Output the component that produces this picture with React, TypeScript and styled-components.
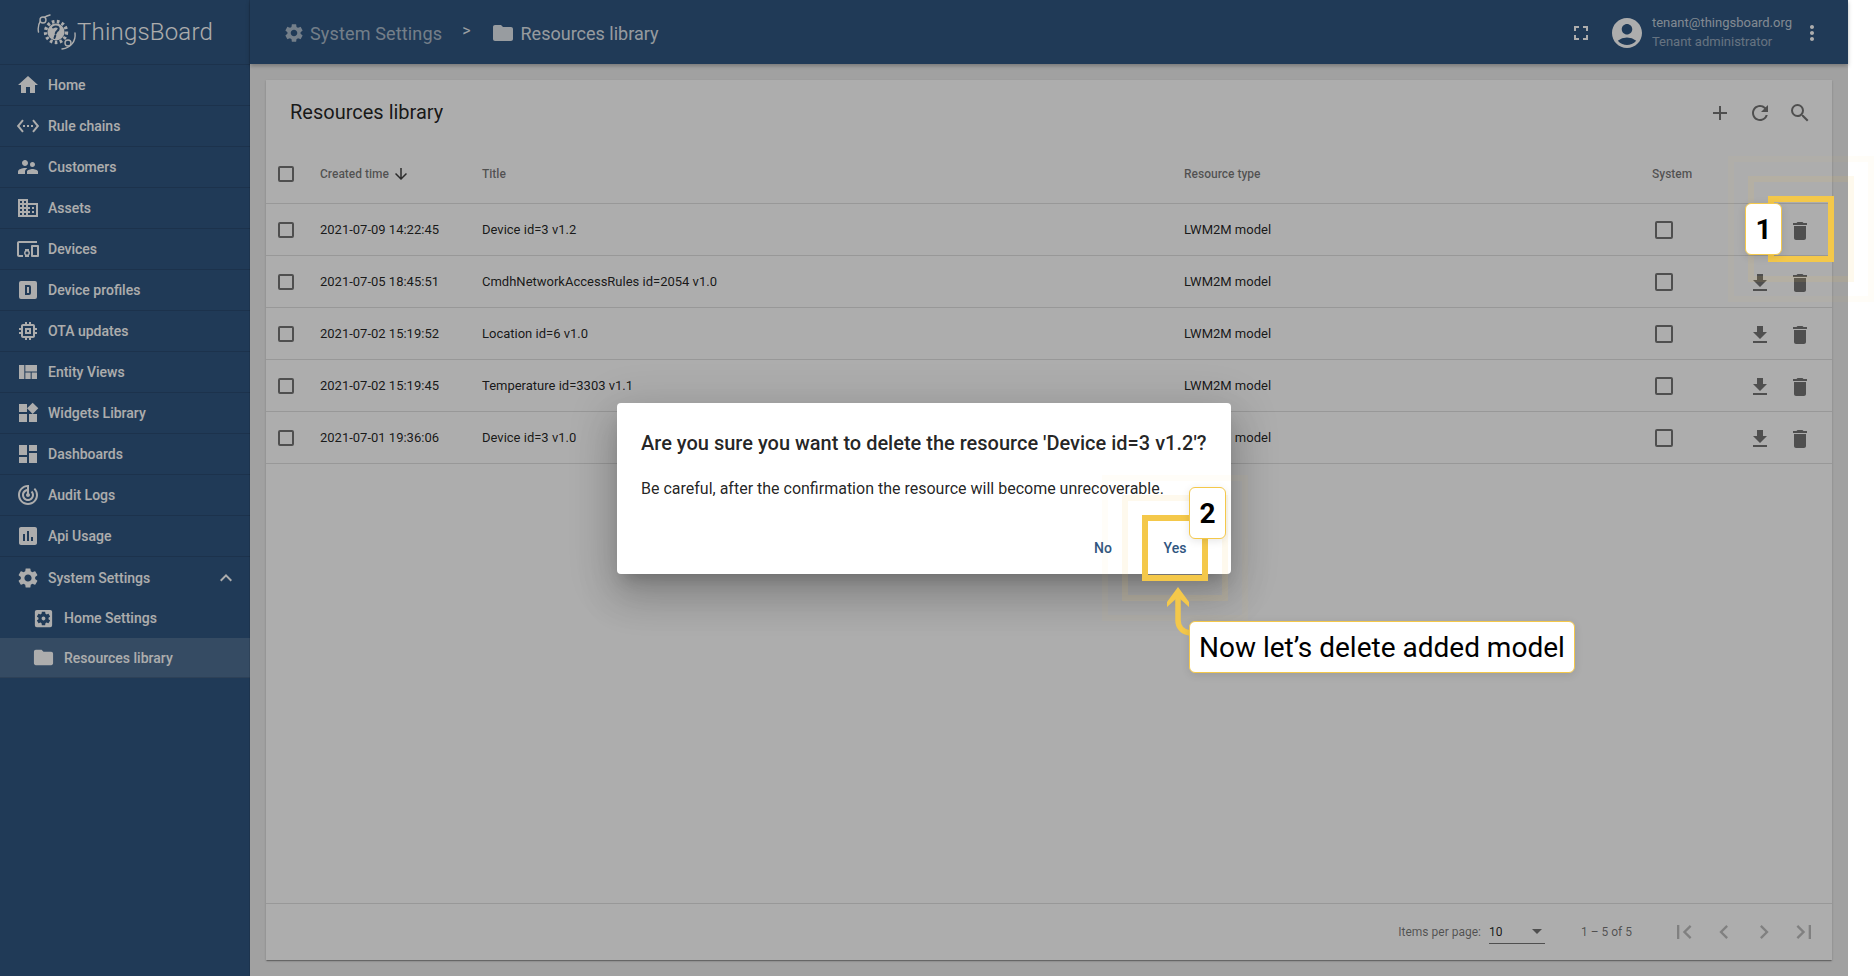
import React from 'react'
import styled, { createGlobalStyle } from 'styled-components'
import {
  MdAccountCircle,
  MdAdd,
  MdArrowDownward,
  MdChevronLeft,
  MdChevronRight,
  MdDashboard,
  MdDelete,
  MdDevicesOther,
  MdDomain,
  MdFileDownload,
  MdFirstPage,
  MdFolder,
  MdFullscreen,
  MdHome,
  MdInsertChart,
  MdKeyboardArrowUp,
  MdLastPage,
  MdMemory,
  MdMoreVert,
  MdRefresh,
  MdSearch,
  MdSettings,
  MdSettingsApplications,
  MdSettingsEthernet,
  MdSupervisorAccount,
  MdTrackChanges,
  MdViewQuilt,
  MdWidgets,
} from 'react-icons/md'

const Global = createGlobalStyle`
  html, body {
    margin: 0;
    background: #fff;
    overflow: hidden;
    font-family: Roboto, "Liberation Sans", sans-serif;
  }
  * { box-sizing: border-box; }
`

const Root = styled.div`
  position: relative;
  display: flex;
  width: 1848px;
  height: 976px;
  background: #eee;
`

const Sidebar = styled.aside`
  width: 250px;
  flex: none;
  background: #305680;
  color: #fff;
`

const Brand = styled.div`
  display: flex;
  align-items: center;
  height: 65px;
  padding: 0 0 1px 37px;
  border-bottom: 1px solid rgba(0, 0, 0, 0.12);
`

const BrandName = styled.span`
  font-size: 24px;
  font-weight: 300;
  letter-spacing: 0.2px;
`

const NavItem = styled.div<{ $sub?: boolean; $active?: boolean; $flat?: boolean }>`
  display: flex;
  align-items: center;
  gap: ${p => (p.$sub ? '9px' : '8px')};
  height: ${p => (p.$sub ? '40px' : '41px')};
  padding-left: ${p => (p.$sub ? '32px' : '16px')};
  font-size: 14px;
  font-weight: 500;
  background: ${p => (p.$active ? 'rgba(255, 255, 255, 0.15)' : 'transparent')};
  border-bottom: ${p => (p.$flat ? 'none' : '1px solid rgba(0, 0, 0, 0.12)')};
  svg { flex: none; }
`

const NavCaret = styled.span`
  display: flex;
  margin-left: auto;
  margin-right: 12px;
`

const Main = styled.div`
  flex: 1;
  min-width: 0;
  display: flex;
  flex-direction: column;
  border-left: 1px solid rgba(0, 0, 0, 0.1);
  margin-left: -1px;
`

const Topbar = styled.header`
  display: flex;
  align-items: center;
  height: 64px;
  flex: none;
  padding-left: 33px;
  background: #305680;
  color: #fff;
  box-shadow: 0 2px 4px rgba(0, 0, 0, 0.25);
  z-index: 1;
`

const Crumb = styled.span<{ $dim?: boolean }>`
  display: flex;
  align-items: center;
  gap: ${p => (p.$dim ? '5px' : '6px')};
  margin-top: 2px;
  font-size: 18px;
  letter-spacing: ${p => (p.$dim ? '0.15px' : '0')};
  color: ${p => (p.$dim ? 'rgba(255, 255, 255, 0.6)' : 'rgba(255, 255, 255, 0.85)')};
`

const CrumbSep = styled.span`
  margin: -4px 20px 0 20px;
  font-size: 16px;
  color: rgba(255, 255, 255, 0.9);
`

const TopRight = styled.div`
  display: flex;
  align-items: center;
  margin-left: auto;
  margin-top: 2px;
  padding-right: 24px;
`

const TopGap = styled.span`
  width: 16px;
`

const UserText = styled.div`
  display: flex;
  flex-direction: column;
  gap: 4px;
  margin: -2px 8px 0 7px;
  font-size: 13px;
  line-height: 15px;
`

const UserMail = styled.span`
  color: rgba(255, 255, 255, 0.7);
`

const UserRole = styled.span`
  color: rgba(255, 255, 255, 0.5);
`

const Content = styled.main`
  flex: 1;
  min-height: 0;
  padding: 16px;
`

const Card = styled.section`
  display: flex;
  flex-direction: column;
  height: 100%;
  background: #fff;
  box-shadow: 0 2px 1px -1px rgba(0, 0, 0, 0.2), 0 1px 1px rgba(0, 0, 0, 0.14), 0 1px 3px rgba(0, 0, 0, 0.12);
`

const CardHead = styled.div`
  display: flex;
  align-items: center;
  height: 64px;
  flex: none;
  padding: 0 20px 0 24px;
`

const CardTitle = styled.h1`
  margin: 0;
  font-size: 20px;
  font-weight: 400;
  color: rgba(0, 0, 0, 0.87);
`

const HeadTools = styled.div`
  display: flex;
  gap: 16px;
  margin: 2px 0 0 auto;
  color: rgba(0, 0, 0, 0.54);
`

const Row = styled.div<{ $head?: boolean }>`
  display: grid;
  grid-template-columns: 54px 162px 702px 468px 88px 1fr;
  align-items: center;
  height: ${p => (p.$head ? '60px' : '52px')};
  flex: none;
  font-size: ${p => (p.$head ? '12px' : '13px')};
  font-weight: ${p => (p.$head ? 500 : 400)};
  color: ${p => (p.$head ? 'rgba(0, 0, 0, 0.54)' : 'rgba(0, 0, 0, 0.87)')};
  border-bottom: 1px solid rgba(0, 0, 0, 0.12);
`

const SortHead = styled.span`
  display: flex;
  align-items: center;
  gap: 3px;
  svg { color: rgba(0, 0, 0, 0.75); }
`

const Check = styled.span<{ $large?: boolean }>`
  display: block;
  width: ${p => (p.$large ? '18px' : '16px')};
  height: ${p => (p.$large ? '18px' : '16px')};
  margin-left: ${p => (p.$large ? '3px' : '12px')};
  border: 2px solid rgba(0, 0, 0, 0.54);
  border-radius: 2px;
`

const RowActions = styled.div`
  display: flex;
  gap: 16px;
  padding: 2px 0 0 8px;
  color: rgba(0, 0, 0, 0.54);
`

const Footer = styled.div`
  display: flex;
  align-items: center;
  height: 57px;
  flex: none;
  margin-top: auto;
  padding: 0 12px 0 0;
  font-size: 12px;
  color: rgba(0, 0, 0, 0.54);
  border-top: 1px solid rgba(0, 0, 0, 0.12);
`

const PageSize = styled.span`
  margin-left: auto;
`

const PageSelect = styled.div`
  display: flex;
  align-items: center;
  justify-content: space-between;
  width: 56px;
  height: 24px;
  margin: 0 36px 0 8px;
  border-bottom: 1px solid rgba(0, 0, 0, 0.54);
  color: rgba(0, 0, 0, 0.87);
`

const SelectCaret = styled.span`
  width: 0;
  height: 0;
  margin-right: 3px;
  border-left: 5px solid transparent;
  border-right: 5px solid transparent;
  border-top: 5px solid rgba(0, 0, 0, 0.54);
`

const Pager = styled.div`
  display: flex;
  gap: 8px;
  margin-left: 36px;
  color: rgba(0, 0, 0, 0.26);
  span { display: flex; justify-content: center; width: 32px; }
`

const Backdrop = styled.div`
  position: absolute;
  inset: 0;
  z-index: 2;
  display: flex;
  align-items: center;
  justify-content: center;
  padding-top: 1px;
  background: rgba(0, 0, 0, 0.32);
`

const Dialog = styled.div`
  width: 614px;
  height: 171px;
  padding: 24px 24px 8px;
  display: flex;
  flex-direction: column;
  background: #fff;
  border-radius: 4px;
  box-shadow: 0 11px 15px -7px rgba(0, 0, 0, 0.2), 0 24px 38px 3px rgba(0, 0, 0, 0.14), 0 9px 46px 8px rgba(0, 0, 0, 0.12);
`

const DialogTitle = styled.h2`
  margin: 0;
  font-size: 20px;
  line-height: 32px;
  font-weight: 500;
  white-space: nowrap;
  color: rgba(0, 0, 0, 0.87);
`

const DialogText = styled.p`
  margin: 20px 0 0;
  font-size: 16px;
  line-height: 20px;
  white-space: nowrap;
  color: rgba(0, 0, 0, 0.87);
`

const DialogActions = styled.div`
  display: flex;
  justify-content: flex-end;
  gap: 8px;
  margin-top: auto;
`

const DialogButton = styled.button`
  width: 64px;
  height: 36px;
  padding: 0;
  border: none;
  background: transparent;
  font-family: inherit;
  font-size: 14px;
  font-weight: 500;
  color: #305680;
`

/* tour overlay: the highlight frames sit over the app at fixed spots */
const Frame = styled.div<{ $x: number; $y: number }>`
  position: absolute;
  z-index: 3;
  left: ${p => p.$x}px;
  top: ${p => p.$y}px;
  width: 66px;
  height: 66px;
  border: 6px solid #f4c84a;

  &::before,
  &::after {
    content: '';
    position: absolute;
    border: 6px solid rgba(244, 200, 74, 0.1);
  }
  &::before { inset: -26px; }
  &::after { inset: -46px; border-color: rgba(244, 200, 74, 0.04); }
`

const Tag = styled.div<{ $x: number; $y: number }>`
  position: absolute;
  z-index: 4;
  left: ${p => p.$x}px;
  top: ${p => p.$y}px;
  height: 52px;
  display: flex;
  align-items: center;
  justify-content: center;
  padding: 0 9px;
  background: #fff;
  border: 1px solid #f4c84a;
  border-radius: 6px;
  color: #000;
  font-size: 28px;
  white-space: nowrap;
  box-shadow: 0 2px 8px rgba(0, 0, 0, 0.1);
`

const Digit = styled(Tag)`
  width: 37px;
  padding: 0;
  font-weight: 700;
`

const Pointer = styled.svg`
  position: absolute;
  z-index: 3;
  left: 1160px;
  top: 582px;
`

const Logo = () => (
  <svg width="40" height="40" viewBox="0 0 40 40" fill="none">
    <circle cx="19" cy="20" r="8.5" fill="#fff" />
    <circle cx="19" cy="20" r="10.5" stroke="#fff" strokeWidth="3.4" strokeDasharray="2.6 2.4" />
    <path d="M16 15.5c3-2 6.5-.6 5.5 2-.7 1.7-2.6 1.8-2.8 4M17.5 26l.8-2.4" stroke="#305680" strokeWidth="2" strokeLinecap="round" />
    <path d="M1.5 20C0 12 4 5 13 3" stroke="#fff" strokeWidth="1.4" strokeLinecap="round" />
    <circle cx="6" cy="8" r="3" stroke="#fff" strokeWidth="1.4" fill="#305680" />
    <path d="M38 21c1 8-4 15-13 16" stroke="#fff" strokeWidth="1.4" strokeLinecap="round" />
    <circle cx="31" cy="31" r="3" stroke="#fff" strokeWidth="1.4" fill="#305680" />
  </svg>
)

const DeviceProfile = () => (
  <svg width="24" height="24" viewBox="0 0 24 24" fill="currentColor">
    <path d="M9,7V17H13A2,2 0 0,0 15,15V9A2,2 0 0,0 13,7H9M5,3H19A2,2 0 0,1 21,5V19A2,2 0 0,1 19,21H5A2,2 0 0,1 3,19V5A2,2 0 0,1 5,3M11,9H13V15H11V9Z" />
  </svg>
)

const nav = [
  { label: 'Home', icon: <MdHome size={24} /> },
  { label: 'Rule chains', icon: <MdSettingsEthernet size={24} /> },
  { label: 'Customers', icon: <MdSupervisorAccount size={24} /> },
  { label: 'Assets', icon: <MdDomain size={24} /> },
  { label: 'Devices', icon: <MdDevicesOther size={24} /> },
  { label: 'Device profiles', icon: <DeviceProfile /> },
  { label: 'OTA updates', icon: <MdMemory size={24} /> },
  { label: 'Entity Views', icon: <MdViewQuilt size={24} /> },
  { label: 'Widgets Library', icon: <MdWidgets size={24} /> },
  { label: 'Dashboards', icon: <MdDashboard size={24} /> },
  { label: 'Audit Logs', icon: <MdTrackChanges size={24} /> },
  { label: 'Api Usage', icon: <MdInsertChart size={24} /> },
]

const resources = [
  ['2021-07-09 14:22:45', 'Device id=3 v1.2'],
  ['2021-07-05 18:45:51', 'CmdhNetworkAccessRules id=2054 v1.0'],
  ['2021-07-02 15:19:52', 'Location id=6 v1.0'],
  ['2021-07-02 15:19:45', 'Temperature id=3303 v1.1'],
  ['2021-07-01 19:36:06', 'Device id=3 v1.0'],
]

const App = () => {
  return (
    <Root>
      <Global />
      <Sidebar>
        <Brand>
          <Logo />
          <BrandName>ThingsBoard</BrandName>
        </Brand>
        {nav.map(item => (
          <NavItem key={item.label}>
            {item.icon}
            {item.label}
          </NavItem>
        ))}
        <NavItem $flat>
          <MdSettings size={24} />
          System Settings
          <NavCaret>
            <MdKeyboardArrowUp size={24} />
          </NavCaret>
        </NavItem>
        <NavItem $sub $flat>
          <MdSettingsApplications size={23} />
          Home Settings
        </NavItem>
        <NavItem $sub $active>
          <MdFolder size={23} />
          Resources library
        </NavItem>
      </Sidebar>
      <Main>
        <Topbar>
          <Crumb $dim>
            <MdSettings size={22} />
            System Settings
          </Crumb>
          <CrumbSep>&gt;</CrumbSep>
          <Crumb>
            <MdFolder size={24} />
            Resources library
          </Crumb>
          <TopRight>
            <MdFullscreen size={24} />
            <TopGap />
            <MdAccountCircle size={36} />
            <UserText>
              <UserMail>tenant@thingsboard.org</UserMail>
              <UserRole>Tenant administrator</UserRole>
            </UserText>
            <MdMoreVert size={24} />
          </TopRight>
        </Topbar>
        <Content>
          <Card>
            <CardHead>
              <CardTitle>Resources library</CardTitle>
              <HeadTools>
                <MdAdd size={24} />
                <MdRefresh size={24} />
                <MdSearch size={24} />
              </HeadTools>
            </CardHead>
            <Row $head>
              <Check />
              <SortHead>
                Created time
                <MdArrowDownward size={18} />
              </SortHead>
              <span>Title</span>
              <span>Resource type</span>
              <span>System</span>
              <span />
            </Row>
            {resources.map(([created, title]) => (
              <Row key={created}>
                <Check />
                <span>{created}</span>
                <span>{title}</span>
                <span>LWM2M model</span>
                <Check $large />
                <RowActions>
                  <MdFileDownload size={24} />
                  <MdDelete size={24} />
                </RowActions>
              </Row>
            ))}
            <Footer>
              <PageSize>Items per page:</PageSize>
              <PageSelect>
                10
                <SelectCaret />
              </PageSelect>
              <span>1 – 5 of 5</span>
              <Pager>
                <span><MdFirstPage size={28} /></span>
                <span><MdChevronLeft size={28} /></span>
                <span><MdChevronRight size={28} /></span>
                <span><MdLastPage size={28} /></span>
              </Pager>
            </Footer>
          </Card>
        </Content>
      </Main>
      <Backdrop>
        <Dialog>
          <DialogTitle>Are you sure you want to delete the resource 'Device id=3 v1.2'?</DialogTitle>
          <DialogText>Be careful, after the confirmation the resource will become unrecoverable.</DialogText>
          <DialogActions>
            <DialogButton>No</DialogButton>
            <DialogButton>Yes</DialogButton>
          </DialogActions>
        </Dialog>
      </Backdrop>
      <Frame $x={1768} $y={196} />
      <Digit $x={1745} $y={203}>1</Digit>
      <Frame $x={1142} $y={515} />
      <Digit $x={1189} $y={487}>2</Digit>
      <Pointer width="32" height="56" viewBox="0 0 32 56" fill="none">
        <path d="M18 10V38C18 45 22 50 30 51" stroke="#f4c84a" strokeWidth="5.5" />
        <path d="M18 5L29 20V25L18 15L7 25V20Z" fill="#f4c84a" />
      </Pointer>
      <Tag $x={1189} $y={621}>Now let’s delete added model</Tag>
    </Root>
  )
}

export default App
